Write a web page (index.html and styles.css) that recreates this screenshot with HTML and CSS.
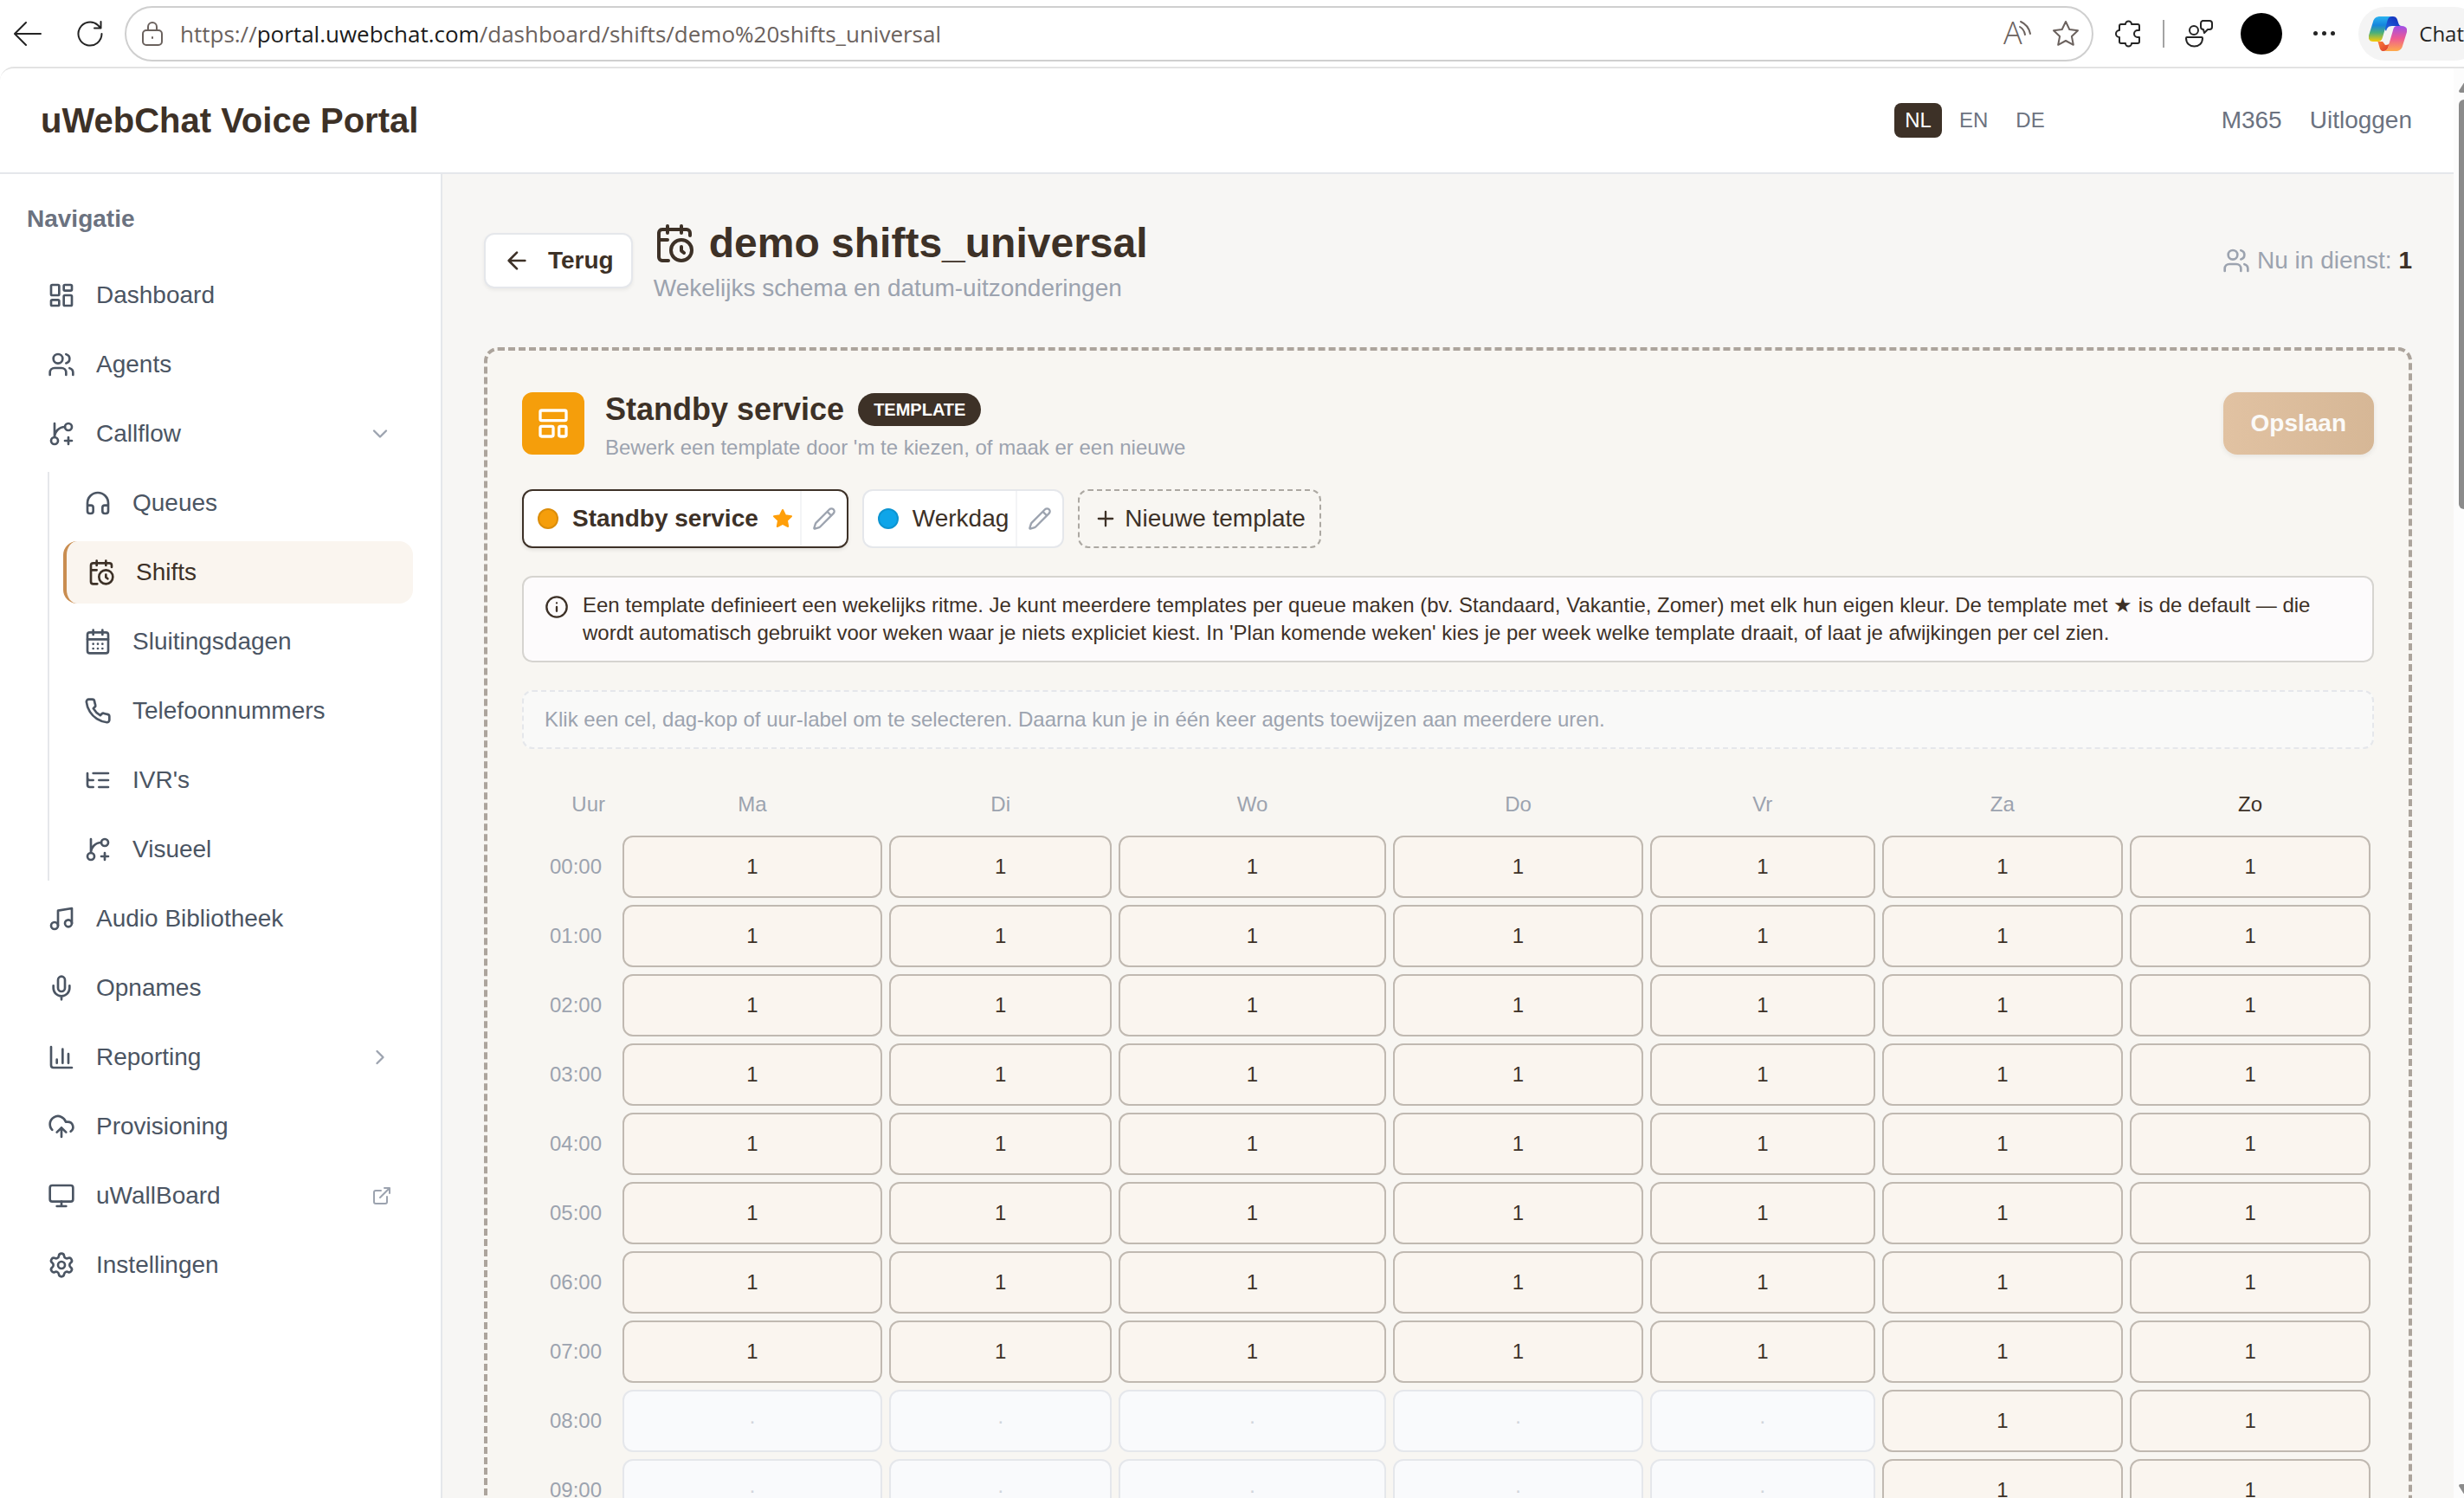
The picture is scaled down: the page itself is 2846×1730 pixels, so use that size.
FILE: index.html
```html
<!DOCTYPE html>
<html lang="nl">
<head>
    <meta charset="UTF-8">
    <meta name="viewport" content="width=device-width, initial-scale=1.0">
    <title>uWebChat Voice Portal</title>
    <link rel="stylesheet" href="styles.css">
</head>
<body>
    <!-- Icons -->
    <svg class="sprite" aria-hidden="true">
        <symbol id="i-back" viewBox="0 0 32 32"><path d="M31 16H2M14 3 1 16l13 13"/></symbol>
        <symbol id="i-refresh" viewBox="0 0 32 32"><path d="M29.500 16A13.500 13.500 0 1 1 25 6l3 3M28.500 2v7.500H21"/></symbol>
        <symbol id="i-lock" viewBox="0 0 24 28"><rect x="1" y="10" width="22" height="17" rx="4"/><path d="M7 10V6a5 5 0 0 1 10 0v4M12 18v1"/></symbol>
        <symbol id="i-fav" viewBox="0 0 32 32"><path d="M16 2l4.300 9 9.700 1.200-7.100 6.800 1.900 9.800L16 24l-8.800 4.800 1.900-9.800L2 12.200l9.700-1.200z"/></symbol>
        <symbol id="i-puzzle" viewBox="0 0 32 32"><path d="M8 5h5a3.500 3.500 0 0 1 7 0h7a2 2 0 0 1 2 2v5h-2a4 4 0 0 0 0 8h2v5a2 2 0 0 1-2 2h-7a3.500 3.500 0 0 1-7 0H8a2 2 0 0 1-2-2v-5a4 4 0 0 1 0-8V7a2 2 0 0 1 2-2z"/></symbol>
        <symbol id="i-feedback" viewBox="0 0 32 32"><circle cx="10" cy="12" r="5"/><path d="M2 20h17a1 1 0 0 1 1 1c0 6-4 9.500-9.500 9.500S1 27 1 21a1 1 0 0 1 1-1zM20 1h8a3 3 0 0 1 3 3v4a3 3 0 0 1-3 3h-2l-4 4-1-4a3 3 0 0 1-3-3V4a3 3 0 0 1 2-3z"/></symbol>
        <symbol id="i-dashboard" viewBox="0 0 24 24"><rect x="3" y="3" width="7" height="9" rx="1"/><rect x="14" y="3" width="7" height="5" rx="1"/><rect x="14" y="12" width="7" height="9" rx="1"/><rect x="3" y="16" width="7" height="5" rx="1"/></symbol>
        <symbol id="i-users" viewBox="0 0 24 24"><path d="M16 21v-2a4 4 0 0 0-4-4H6a4 4 0 0 0-4 4v2"/><circle cx="9" cy="7" r="4"/><path d="M22 21v-2a4 4 0 0 0-3-3.870M16 3.130a4 4 0 0 1 0 7.750"/></symbol>
        <symbol id="i-branch" viewBox="0 0 24 24"><path d="M6 3v12M15 6a9 9 0 0 0-9 9M18 15v6M21 18h-6"/><circle cx="18" cy="6" r="3"/><circle cx="6" cy="18" r="3"/></symbol>
        <symbol id="i-headphones" viewBox="0 0 24 24"><path d="M3 14h3a2 2 0 0 1 2 2v3a2 2 0 0 1-2 2H5a2 2 0 0 1-2-2v-7a9 9 0 0 1 18 0v7a2 2 0 0 1-2 2h-1a2 2 0 0 1-2-2v-3a2 2 0 0 1 2-2h3"/></symbol>
        <symbol id="i-shift" viewBox="0 0 24 24"><path d="M21 7.500V6a2 2 0 0 0-2-2H5a2 2 0 0 0-2 2v14a2 2 0 0 0 2 2h3.500M16 2v4M8 2v4M3 10h5M17.500 17.500 16 16.300V14"/><circle cx="16" cy="16" r="6"/></symbol>
        <symbol id="i-calendar" viewBox="0 0 24 24"><path d="M8 2v4M16 2v4M3 10h18M8 14h.010M12 14h.010M16 14h.010M8 18h.010M12 18h.010M16 18h.010"/><rect x="3" y="4" width="18" height="18" rx="2"/></symbol>
        <symbol id="i-phone" viewBox="0 0 24 24"><path d="M22 16.920v3a2 2 0 0 1-2.180 2 19.790 19.790 0 0 1-8.630-3.070 19.500 19.500 0 0 1-6-6 19.790 19.790 0 0 1-3.070-8.670A2 2 0 0 1 4.110 2h3a2 2 0 0 1 2 1.720 12.840 12.840 0 0 0 .7 2.810 2 2 0 0 1-.45 2.110L8.090 9.910a16 16 0 0 0 6 6l1.270-1.270a2 2 0 0 1 2.110-.45 12.840 12.840 0 0 0 2.810.7A2 2 0 0 1 22 16.920z"/></symbol>
        <symbol id="i-tree" viewBox="0 0 24 24"><path d="M21 12h-8M21 6H8M21 18h-8M3 6v4c0 1.100.9 2 2 2h3M3 10v6c0 1.100.9 2 2 2h3"/></symbol>
        <symbol id="i-music" viewBox="0 0 24 24"><path d="M9 18V5l12-2v13"/><circle cx="6" cy="18" r="3"/><circle cx="18" cy="16" r="3"/></symbol>
        <symbol id="i-mic" viewBox="0 0 24 24"><path d="M12 2a3 3 0 0 0-3 3v7a3 3 0 0 0 6 0V5a3 3 0 0 0-3-3zM19 10v2a7 7 0 0 1-14 0v-2M12 19v3"/></symbol>
        <symbol id="i-chart" viewBox="0 0 24 24"><path d="M3 3v16a2 2 0 0 0 2 2h16M18 17V9M13 17V5M8 17v-3"/></symbol>
        <symbol id="i-upload" viewBox="0 0 24 24"><path d="M12 13v8M4 14.899A7 7 0 1 1 15.710 8h1.790a4.500 4.500 0 0 1 2.500 8.242M8 17l4-4 4 4"/></symbol>
        <symbol id="i-monitor" viewBox="0 0 24 24"><rect x="2" y="3" width="20" height="14" rx="2"/><path d="M8 21h8M12 17v4"/></symbol>
        <symbol id="i-settings" viewBox="0 0 24 24"><path d="M9.671 4.136a2.340 2.340 0 0 1 4.659 0 2.340 2.340 0 0 0 3.319 1.915 2.340 2.340 0 0 1 2.330 4.033 2.340 2.340 0 0 0 0 3.831 2.340 2.340 0 0 1-2.330 4.033 2.340 2.340 0 0 0-3.319 1.915 2.340 2.340 0 0 1-4.659 0 2.340 2.340 0 0 0-3.320-1.915 2.340 2.340 0 0 1-2.330-4.033 2.340 2.340 0 0 0 0-3.831A2.340 2.340 0 0 1 6.350 6.051a2.340 2.340 0 0 0 3.319-1.915"/><circle cx="12" cy="12" r="3"/></symbol>
        <symbol id="i-down" viewBox="0 0 24 24"><path d="m6 9 6 6 6-6"/></symbol>
        <symbol id="i-right" viewBox="0 0 24 24"><path d="m9 18 6-6-6-6"/></symbol>
        <symbol id="i-external" viewBox="0 0 24 24"><path d="M15 3h6v6M10 14 21 3M18 13v6a2 2 0 0 1-2 2H5a2 2 0 0 1-2-2V8a2 2 0 0 1 2-2h6"/></symbol>
        <symbol id="i-arrow" viewBox="0 0 24 24"><path d="m12 19-7-7 7-7M19 12H5"/></symbol>
        <symbol id="i-template" viewBox="0 0 24 24"><rect x="3" y="3" width="18" height="7" rx="1"/><rect x="3" y="14" width="9" height="7" rx="1"/><rect x="16" y="14" width="5" height="7" rx="1"/></symbol>
        <symbol id="i-star" viewBox="0 0 24 24"><path d="M12 2l3.090 6.260L22 9.270l-5 4.870 1.180 6.880L12 17.770l-6.180 3.250L7 14.140 2 9.270l6.910-1.010z"/></symbol>
        <symbol id="i-pencil" viewBox="0 0 24 24"><path d="M21.174 6.812a1 1 0 0 0-3.986-3.987L3.842 16.174a2 2 0 0 0-.5.830l-1.321 4.352a.5.5 0 0 0 .623.622l4.353-1.320a2 2 0 0 0 .830-.497zM15 5l4 4"/></symbol>
        <symbol id="i-plus" viewBox="0 0 24 24"><path d="M5 12h14M12 5v14"/></symbol>
        <symbol id="i-info" viewBox="0 0 24 24"><circle cx="12" cy="12" r="10"/><path d="M12 16v-4M12 8h.010"/></symbol>
    </svg>

    <div class="browser-bar">
        <button class="tool" aria-label="Back"><svg class="icon thin"><use href="#i-back"/></svg></button>
        <button class="tool tool-refresh" aria-label="Refresh"><svg class="icon thin"><use href="#i-refresh"/></svg></button>
        <div class="address">
            <svg class="lock thin"><use href="#i-lock"/></svg>
            <div class="url" role="textbox" aria-label="Address">https://<span class="url-host">portal.uwebchat.com</span>/dashboard/shifts/demo%20shifts_universal</div>
            <button class="tool" aria-label="Read aloud">
                <svg class="icon read-aloud" viewBox="0 0 32 32"><text class="read-letter" x="0" y="28">A</text><path d="M19 8q5 3 6 9M20 2q9 4 11 14"/></svg>
            </button>
            <button class="tool" aria-label="Favorite"><svg class="icon thin"><use href="#i-fav"/></svg></button>
        </div>
        <button class="tool" aria-label="Extensions"><svg class="icon thin"><use href="#i-puzzle"/></svg></button>
        <span class="tool-divider"></span>
        <button class="tool" aria-label="Feedback"><svg class="icon thin"><use href="#i-feedback"/></svg></button>
        <button class="avatar" aria-label="Profile"></button>
        <button class="tool tool-more" aria-label="More"><span class="more-dot"></span><span class="more-dot"></span><span class="more-dot"></span></button>
        <button class="copilot">
            <svg class="copilot-logo" viewBox="0 0 44 40" aria-hidden="true">
                <defs>
                    <linearGradient id="g-left" x1="0" y1="0" x2="0" y2="1"><stop offset="0" stop-color="#2bb3f0"/><stop offset=".35" stop-color="#1585dd"/><stop offset=".65" stop-color="#4bb07a"/><stop offset="1" stop-color="#fccb05"/></linearGradient>
                    <linearGradient id="g-fold" x1="0" y1="1" x2="1" y2="0"><stop offset="0" stop-color="#1f6fe0"/><stop offset="1" stop-color="#1226b8"/></linearGradient>
                    <linearGradient id="g-right" x1="0" y1="0" x2="0" y2="1"><stop offset="0" stop-color="#a04ee8"/><stop offset=".5" stop-color="#ee5a93"/><stop offset="1" stop-color="#ffab4a"/></linearGradient>
                    <linearGradient id="g-low" x1="0" y1="0" x2="1" y2="1"><stop offset="0" stop-color="#ff8a3d"/><stop offset="1" stop-color="#d9352c"/></linearGradient>
                </defs>
                <path fill="url(#g-fold)" d="M22 0h6c4 0 5 3 6 7 1 3 2 4 4 4H27c-5 0-6 3-7 6l-2-3z"/>
                <path fill="url(#g-low)" d="M10 29h6c4 0 5-1 6-4l4 1-3 8c-1 4-3 6-6 6-3 0-4-2-5-6-1-3-1-5-2-5z"/>
                <path fill="url(#g-left)" d="M13 0h14c-4 0-5 3-6 7l-5 17c-1 4-3 5-6 5H5c-4 0-6-3-5-7L5 6c1-4 4-6 8-6z"/>
                <path fill="#f4f4f4" d="M31 11h3c-3 0-4 2-5 5l-4 13c-1 3-3 4-6 4l-3-4c3-1 4-3 5-6l3-8c1-3 3-4 7-4z"/>
                <path fill="url(#g-right)" d="M33 11h5c5 0 7 3 6 7l-5 16c-1 4-4 6-8 6H17c4 0 5-3 6-7l5-17c1-4 2-5 5-5z"/>
            </svg>
            Chat
        </button>
    </div>

    <div class="viewport">
        <div class="page">
            <header class="topbar">
                <div class="brand">uWebChat Voice Portal</div>
                <div class="languages">
                    <button class="lang active">NL</button>
                    <button class="lang">EN</button>
                    <button class="lang">DE</button>
                </div>
                <div class="account">
                    <span class="tenant">M365</span>
                    <a class="logout" href="#">Uitloggen</a>
                </div>
            </header>

            <div class="layout">
                <nav class="sidebar" aria-label="Navigatie">
                    <div class="nav-title">Navigatie</div>
                    <div class="nav-list">
                        <a class="nav-item" href="#"><svg class="icon"><use href="#i-dashboard"/></svg>Dashboard</a>
                        <a class="nav-item" href="#"><svg class="icon"><use href="#i-users"/></svg>Agents</a>
                        <a class="nav-item" href="#"><svg class="icon"><use href="#i-branch"/></svg>Callflow<svg class="nav-arrow"><use href="#i-down"/></svg></a>
                        <div class="nav-sub">
                            <a class="nav-item" href="#"><svg class="icon"><use href="#i-headphones"/></svg>Queues</a>
                            <a class="nav-item active" href="#"><svg class="icon"><use href="#i-shift"/></svg>Shifts</a>
                            <a class="nav-item" href="#"><svg class="icon"><use href="#i-calendar"/></svg>Sluitingsdagen</a>
                            <a class="nav-item" href="#"><svg class="icon"><use href="#i-phone"/></svg>Telefoonnummers</a>
                            <a class="nav-item" href="#"><svg class="icon"><use href="#i-tree"/></svg>IVR's</a>
                            <a class="nav-item" href="#"><svg class="icon"><use href="#i-branch"/></svg>Visueel</a>
                        </div>
                        <a class="nav-item" href="#"><svg class="icon"><use href="#i-music"/></svg>Audio Bibliotheek</a>
                        <a class="nav-item" href="#"><svg class="icon"><use href="#i-mic"/></svg>Opnames</a>
                        <a class="nav-item" href="#"><svg class="icon"><use href="#i-chart"/></svg>Reporting<svg class="nav-arrow"><use href="#i-right"/></svg></a>
                        <a class="nav-item" href="#"><svg class="icon"><use href="#i-upload"/></svg>Provisioning</a>
                        <a class="nav-item" href="#"><svg class="icon"><use href="#i-monitor"/></svg>uWallBoard<svg class="nav-arrow small"><use href="#i-external"/></svg></a>
                        <a class="nav-item" href="#"><svg class="icon"><use href="#i-settings"/></svg>Instellingen</a>
                    </div>
                </nav>

                <main class="content">
                    <div class="page-head">
                        <button class="back"><svg class="icon"><use href="#i-arrow"/></svg>Terug</button>
                        <div class="page-title">
                            <h1><svg class="title-icon"><use href="#i-shift"/></svg>demo shifts_universal</h1>
                            <p>Wekelijks schema en datum-uitzonderingen</p>
                        </div>
                        <div class="on-duty"><svg class="icon"><use href="#i-users"/></svg><span>Nu in dienst: <strong>1</strong></span></div>
                    </div>

                    <section class="panel">
                        <div class="panel-head">
                            <div class="panel-icon"><svg><use href="#i-template"/></svg></div>
                            <div class="panel-title">
                                <h2>Standby service <span class="badge">TEMPLATE</span></h2>
                                <p>Bewerk een template door 'm te kiezen, of maak er een nieuwe</p>
                            </div>
                            <button class="save">Opslaan</button>
                        </div>

                        <div class="templates">
                            <div class="template active">
                                <button class="template-name"><span class="dot orange"></span>Standby service<svg class="star"><use href="#i-star"/></svg></button>
                                <button class="template-edit" aria-label="Standby service bewerken"><svg><use href="#i-pencil"/></svg></button>
                            </div>
                            <div class="template">
                                <button class="template-name"><span class="dot blue"></span>Werkdag</button>
                                <button class="template-edit" aria-label="Werkdag bewerken"><svg><use href="#i-pencil"/></svg></button>
                            </div>
                            <button class="template-new"><svg><use href="#i-plus"/></svg>Nieuwe template</button>
                        </div>

                        <div class="info">
                            <svg><use href="#i-info"/></svg>
                            <p>Een template definieert een wekelijks ritme. Je kunt meerdere templates per queue maken (bv. Standaard, Vakantie, Zomer) met elk hun eigen kleur. De template met ★ is de default — die wordt automatisch gebruikt voor weken waar je niets expliciet kiest. In 'Plan komende weken' kies je per week welke template draait, of laat je afwijkingen per cel zien.</p>
                        </div>

                        <div class="hint">Klik een cel, dag-kop of uur-label om te selecteren. Daarna kun je in één keer agents toewijzen aan meerdere uren.</div>

                        <table class="schedule">
                            <colgroup>
                                <col class="col-hour"><col class="col-ma"><col class="col-di"><col class="col-wo">
                                <col class="col-do"><col class="col-vr"><col class="col-za"><col class="col-zo">
                            </colgroup>
                            <thead>
                                <tr>
                                    <th class="hour-head">Uur</th>
                                    <th>Ma</th><th>Di</th><th>Wo</th><th>Do</th><th>Vr</th><th>Za</th>
                                    <th class="today">Zo</th>
                                </tr>
                            </thead>
                            <tbody id="schedule-body"></tbody>
                        </table>
                    </section>
                </main>
            </div>
        </div>
        <div class="scrollbar" aria-hidden="true">
            <svg viewBox="0 0 16 12"><path d="M8 0q2 0 3 2l5 8q0 2-2 2H2q-2 0-2-2l5-8q1-2 3-2z"/></svg>
            <div class="scroll-thumb"></div>
            <svg class="scroll-end" viewBox="0 0 16 12"><path d="M8 12q2 0 3-2l5-8q0-2-2-2H2Q0 0 0 2l5 8q1 2 3 2z"/></svg>
        </div>
    </div>
    <script src="script.js"></script>
</body>
</html>
```
FILE: styles.css
```css
* {
    box-sizing: border-box;
}
body {
    margin: 0;
    height: 100vh;
    display: flex;
    flex-direction: column;
    overflow: hidden;
    font-family: Arial, "Liberation Sans", sans-serif;
    font-size: 28px;
    line-height: 40px;
    color: #3d3127;
    background-color: #fff;
}
h1, h2, p {
    margin: 0;
}
a {
    color: inherit;
    text-decoration: none;
}
button {
    font: inherit;
    color: inherit;
    background: none;
    border: 0;
    padding: 0;
    cursor: pointer;
}
svg {
    flex: none;
    fill: none;
    stroke: currentColor;
    stroke-width: 2;
    stroke-linecap: round;
    stroke-linejoin: round;
}
.sprite {
    display: none;
}
.icon {
    width: 32px;
    height: 32px;
}

/* Browser bar */
.browser-bar {
    flex: none;
    height: 77px;
    padding-left: 16px;
    display: flex;
    align-items: center;
    gap: 24px;
    font-family: "Open Sans", "Noto Sans", sans-serif;
    color: #242424;
}
.tool {
    display: flex;
    flex: none;
}
.tool-refresh {
    margin-left: 16px;
}
.address {
    flex: 1;
    height: 64px;
    padding: 0 14px 0 18px;
    display: flex;
    align-items: center;
    gap: 24px;
    border: 2px solid #cfcfcf;
    border-radius: 32px;
    color: #6b625e;
}
.lock {
    width: 24px;
    height: 28px;
}
.url {
    flex: 1;
    white-space: nowrap;
    font-size: 26px;
    margin-left: -4px;
}
.url-host {
    color: #1b1b1b;
}
.read-aloud {
    overflow: visible;
}
.read-letter {
    font-size: 36px;
    font-weight: 300;
    fill: currentColor;
    stroke: none;
}
.tool-divider {
    width: 2px;
    height: 32px;
    background-color: #a3a3a3;
}
.avatar {
    flex: none;
    width: 48px;
    height: 48px;
    margin: 0 8px;
    border-radius: 50%;
    background-color: #000;
}
.tool-more {
    width: 32px;
    gap: 5px;
    justify-content: center;
}
.more-dot {
    width: 5px;
    height: 5px;
    border-radius: 50%;
    background-color: #242424;
}
.copilot {
    flex: none;
    height: 62px;
    padding: 0 20px 0 12px;
    margin-right: -20px;
    display: flex;
    align-items: center;
    gap: 14px;
    border-radius: 31px;
    background-color: #f4f4f4;
    font-size: 24px;
}
.copilot-logo {
    width: 44px;
    height: 40px;
    stroke: none;
}

/* Page */
.viewport {
    flex: 1;
    min-height: 0;
    display: flex;
    overflow: hidden;
    border-top: 2px solid #e3e3e3;
    border-top-left-radius: 16px;
}
.page {
    flex: 1;
    min-width: 0;
    display: flex;
    flex-direction: column;
}
.topbar {
    flex: none;
    height: 122px;
    padding: 0 48px 0 47px;
    display: flex;
    align-items: center;
    border-bottom: 2px solid #e5e7eb;
    color: #6b7280;
}
.brand {
    margin-right: auto;
    font-size: 40px;
    font-weight: bold;
    color: #3d3127;
}
.languages {
    display: flex;
    gap: 8px;
    margin-right: 192px;
}
.lang {
    height: 40px;
    padding: 0 12px;
    border-radius: 8px;
    font-size: 24px;
}
.lang.active {
    background-color: #3d3127;
    color: #fff;
}
.account {
    display: flex;
    gap: 32px;
}
.layout {
    flex: 1;
    min-height: 0;
    display: flex;
}

/* Sidebar */
.sidebar {
    flex: none;
    width: 511px;
    padding: 32px 32px 32px 31px;
    border-right: 2px solid #e5e7eb;
    color: #4b5563;
}
.nav-title {
    margin-bottom: 32px;
    font-weight: bold;
    color: #6b7280;
}
.nav-list, .nav-sub {
    display: flex;
    flex-direction: column;
    gap: 8px;
}
.nav-sub {
    margin-left: 24px;
    padding-left: 16px;
    border-left: 2px solid #e5e7eb;
}
.nav-item {
    height: 72px;
    padding: 0 24px;
    display: flex;
    align-items: center;
    gap: 24px;
    border-radius: 16px;
}
.nav-item.active {
    border-left: 4px solid #c98d50;
    background-color: #faf5ef;
    color: #3d3127;
}
.nav-arrow {
    width: 28px;
    height: 28px;
    margin-left: auto;
    color: #9ca3af;
}
.nav-arrow.small {
    width: 24px;
    height: 24px;
}

/* Content */
.content {
    flex: 1;
    min-width: 0;
    padding: 48px;
    background-color: #f7f6f4;
}
.page-head {
    display: flex;
    align-items: center;
    gap: 24px;
    margin-bottom: 48px;
}
.back {
    height: 64px;
    padding: 0 20px;
    display: flex;
    align-items: center;
    gap: 20px;
    border: 2px solid #e5e7eb;
    border-radius: 12px;
    background-color: #fff;
    box-shadow: 0 2px 4px rgba(0,0,0,0.06);
    font-weight: bold;
}
.page-title h1 {
    display: flex;
    align-items: center;
    gap: 16px;
    font-size: 48px;
    line-height: 64px;
}
.title-icon {
    width: 48px;
    height: 48px;
}
.page-title p {
    color: #9ca3af;
}
.on-duty {
    margin-left: auto;
    display: flex;
    align-items: center;
    gap: 8px;
    color: #9ca3af;
}
.on-duty strong {
    color: #3d3127;
}

.panel {
    padding: 40px;
    display: flex;
    flex-direction: column;
    gap: 32px;
    border: 4px dashed #aca49c;
    border-radius: 16px;
    background-color: #f8f6f2;
}
.panel-head {
    display: flex;
    align-items: center;
    gap: 24px;
}
.panel-icon {
    width: 72px;
    height: 72px;
    display: flex;
    align-items: center;
    justify-content: center;
    border-radius: 12px;
    background-color: #f59e0b;
    color: #fff;
}
.panel-icon svg {
    width: 40px;
    height: 40px;
}
.panel-title h2 {
    display: flex;
    align-items: center;
    gap: 16px;
    font-size: 36px;
    line-height: 56px;
}
.panel-title p {
    font-size: 24px;
    line-height: 32px;
    color: #9ca3af;
}
.badge {
    padding: 3px 18px;
    border-radius: 20px;
    background-color: #3d3127;
    color: #fff;
    font-size: 20px;
    line-height: 32px;
}
.save {
    height: 72px;
    padding: 0 32px;
    margin-left: auto;
    border-radius: 16px;
    background: linear-gradient(90deg, #e1c2a2, #d6b796);
    box-shadow: 0 2px 6px rgba(0,0,0,0.08);
    color: #fbfaf8;
    font-weight: bold;
}

/* Templates */
.templates {
    display: flex;
    gap: 16px;
}
.template {
    height: 68px;
    display: flex;
    border: 2px solid #e5e7eb;
    border-radius: 12px;
    background-color: #fff;
}
.template.active {
    border-color: #3d3127;
    box-shadow: 0 2px 4px rgba(0,0,0,0.1);
    font-weight: bold;
}
.template-name {
    padding: 0 8px 0 16px;
    display: flex;
    align-items: center;
    gap: 16px;
}
.dot {
    width: 24px;
    height: 24px;
    border: 2px solid rgba(0,0,0,0.1);
    border-radius: 50%;
}
.dot.orange {
    background-color: #f59e0b;
}
.dot.blue {
    background-color: #0ea5e9;
}
.star {
    width: 24px;
    height: 24px;
    fill: #ff9f0a;
    stroke: #ff9f0a;
    stroke-width: 2;
}
.template-edit {
    padding: 0 12px;
    display: flex;
    align-items: center;
    border-left: 2px solid #f3f4f6;
    color: #9ca3af;
}
.template-edit svg, .template-new svg, .info svg {
    width: 28px;
    height: 28px;
}
.template-new {
    padding: 0 16px;
    display: flex;
    align-items: center;
    gap: 8px;
    border: 2px dashed #aca8a2;
    border-radius: 12px;
}

.info {
    padding: 16px 24px;
    display: flex;
    gap: 16px;
    border: 2px solid #d6d4d0;
    border-radius: 12px;
    background-color: #fdfbfc;
    font-size: 24px;
    line-height: 32px;
}
.info svg {
    margin-top: 4px;
}
.hint {
    padding: 16px 24px;
    border: 2px dashed #e5e7eb;
    border-radius: 12px;
    background-color: #f9f9f8;
    color: #9ca3af;
    font-size: 24px;
    line-height: 32px;
}

/* Schedule */
.schedule {
    width: 100%;
    table-layout: fixed;
    border-collapse: collapse;
    font-size: 24px;
    line-height: 32px;
}
.col-hour {
    width: 112px;
}
.col-ma {
    width: 14.4%;
}
.col-di {
    width: 12.4%;
}
.col-wo {
    width: 14.8%;
}
.col-do {
    width: 13.9%;
}
.col-vr {
    width: 12.5%;
}
.col-za {
    width: 13.4%;
}
.schedule th {
    padding: 16px 4px;
    font-weight: normal;
    color: #9ca3af;
}
.schedule thead .today {
    color: #3d3127;
}
.schedule thead .hour-head {
    padding-right: 16px;
    text-align: right;
}
.schedule tbody th {
    padding: 0 20px 0 0;
    text-align: right;
}
.schedule td {
    padding: 4px;
}
.cell {
    display: block;
    width: 100%;
    height: 72px;
    border: 2px solid #c0b9b1;
    border-radius: 12px;
    background-color: #faf5ef;
}
.cell.empty {
    border-color: #e5e7eb;
    background-color: #f9fafc;
    color: #d1d5db;
}

.scrollbar {
    flex: none;
    width: 12px;
    padding: 16px 0 4px 6px;
    display: flex;
    flex-direction: column;
    background-color: #fcfcfc;
}
.scrollbar svg {
    width: 16px;
    height: 12px;
    fill: #8b8b8b;
    stroke: none;
}
.scroll-end {
    margin-top: auto;
}
.scroll-thumb {
    width: 12px;
    height: 29%;
    margin-top: 8px;
    border-radius: 6px;
    background-color: #8b8b8b;
}
```
FILE: script.js
```js
// Number of agents per hour, Monday to Sunday (0 = nobody assigned)
const schedule = [
    [1, 1, 1, 1, 1, 1, 1],
    [1, 1, 1, 1, 1, 1, 1],
    [1, 1, 1, 1, 1, 1, 1],
    [1, 1, 1, 1, 1, 1, 1],
    [1, 1, 1, 1, 1, 1, 1],
    [1, 1, 1, 1, 1, 1, 1],
    [1, 1, 1, 1, 1, 1, 1],
    [1, 1, 1, 1, 1, 1, 1],
    [0, 0, 0, 0, 0, 1, 1],
    [0, 0, 0, 0, 0, 1, 1]
];

const body = document.getElementById('schedule-body');

schedule.forEach((days, hour) => {
    const row = body.insertRow();
    const label = document.createElement('th');
    label.textContent = String(hour).padStart(2, '0') + ':00';
    row.appendChild(label);

    days.forEach((agents) => {
        const button = document.createElement('button');
        button.className = agents ? 'cell' : 'cell empty';
        button.textContent = agents || '·';
        row.insertCell().appendChild(button);
    });
});
```
